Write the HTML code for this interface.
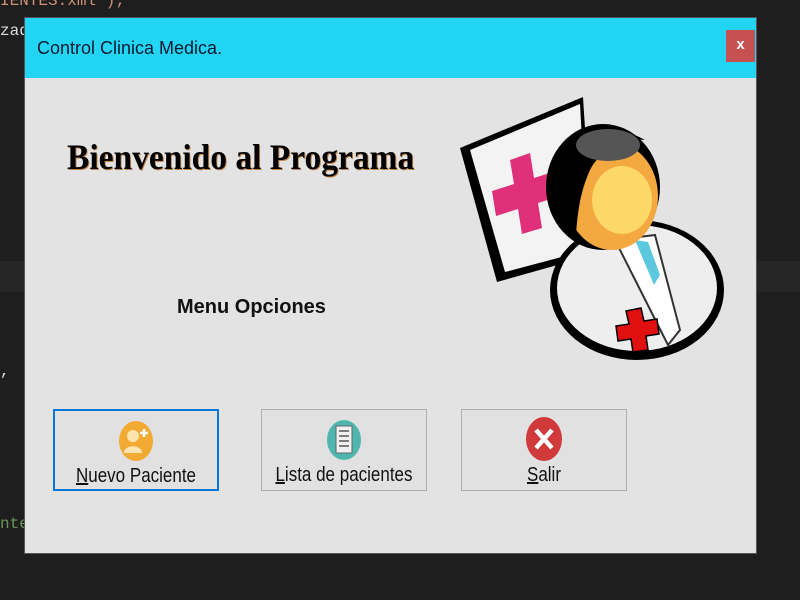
<!DOCTYPE html>
<html><head><meta charset="utf-8"><style>
body{margin:0;width:800px;height:600px;background:#1e1e1e;position:relative;overflow:hidden;font-family:"Liberation Sans",sans-serif}
.band{position:absolute;left:0;width:800px;top:261px;height:31px;background:#262626}
.code{position:absolute;font-family:"Liberation Mono",monospace;font-size:16px;color:#ce9178}
.win{position:absolute;left:24px;top:17px;width:731px;height:535px;background:#e3e3e3;border:1px solid #555}
.title{position:absolute;left:0;top:0;width:731px;height:60px;background:#22d5f4}
.title span{position:absolute;left:12px;top:20px;font-size:18px;color:#0a1a30}
.close{position:absolute;left:701px;top:12px;width:29px;height:32px;background:#c75050;color:#fff;font-size:15px;font-weight:bold;text-align:center;line-height:30px}
.h1{position:absolute;left:42px;top:118px;font-family:"Liberation Serif",serif;font-weight:bold;font-size:36px;color:#000;letter-spacing:0px;text-shadow:1px 1px 0 #c08040;transform:scaleX(0.93);transform-origin:left}
.menu{position:absolute;left:152px;top:278px;font-size:20px;font-weight:bold;color:#111}
.btn{position:absolute;top:391px;width:166px;height:82px;border:1px solid #adadad;background:#e1e1e1;box-sizing:border-box;text-align:center}
.btn.f{border:2px solid #0078d7}
.btn .lbl{position:absolute;left:-10px;right:-10px;top:54px;font-size:20px;color:#111;transform:scaleX(0.85)}
.btn svg{position:absolute;left:50%;top:9px;margin-left:-19px}
</style></head><body>
<div class="band"></div>
<div class="code" style="left:0;top:-8px">IENTES.xml");</div>
<div class="code" style="left:0;top:22px;color:#ddd">zad</div>
<div class="code" style="left:0;top:362px;color:#ddd">,</div>
<div class="code" style="left:0;top:515px;color:#6a9955">nte</div>
<div class="win">
<div class="title"><span>Control Clinica Medica.</span><div class="close">x</div></div>
<div class="h1">Bienvenido al Programa</div>
<div class="menu">Menu Opciones</div>
<div class="btn f" style="left:28px">
<svg width="38" height="42" viewBox="0 0 38 42"><ellipse cx="19" cy="21" rx="17" ry="20" fill="#f3aa33"/><circle cx="16" cy="16" r="6" fill="#fde3b0"/><path d="M7,33 C7,24 25,24 25,33 Z" fill="#fde3b0"/><path d="M27,9 v8 M23,13 h8" stroke="#fff" stroke-width="2.5"/></svg>
<div class="lbl"><u>N</u>uevo Paciente</div></div>
<div class="btn" style="left:236px">
<svg width="38" height="42" viewBox="0 0 38 42"><ellipse cx="19" cy="21" rx="17" ry="20" fill="#4fb7b0"/><rect x="11" y="7" width="16" height="27" fill="#f0f0f0" stroke="#666"/><path d="M14,12h10M14,17h10M14,22h10M14,27h10" stroke="#555" stroke-width="1.5"/></svg>
<div class="lbl"><u>L</u>ista de pacientes</div></div>
<div class="btn" style="left:436px">
<svg width="38" height="46" viewBox="0 0 38 46" style="top:6px"><ellipse cx="19" cy="23" rx="18" ry="22" fill="#d03a3a"/><path d="M11,14 L27,32 M27,14 L11,32" stroke="#fff" stroke-width="4.5"/></svg>
<div class="lbl"><u>S</u>alir</div></div>
</div>
<svg style="position:absolute;left:0;top:0" width="800" height="600" viewBox="0 0 800 600">
<polygon points="460,148 583,97 593,255 497,282" fill="#000"/>
<polygon points="470,150 580,104 588,250 505,272" fill="#f3f3f3"/>
<polygon points="510,160 530,153 534,178 556,171 560,196 538,203 542,228 522,234 518,209 496,216 492,191 514,184" fill="#e0307a"/>
<ellipse cx="637" cy="290" rx="87" ry="70" fill="#000"/>
<ellipse cx="637" cy="288" rx="80" ry="63" fill="#eee"/>
<polygon points="615,240 655,235 680,330 668,345" fill="#fff" stroke="#333" stroke-width="2"/>
<polygon points="635,240 648,242 660,275 654,285" fill="#5bc8e0"/>
<polygon points="626,311 641,308 644,321 657,319 659,334 646,336 648,350 633,352 631,339 618,341 616,326 629,324" fill="#e01010" stroke="#000" stroke-width="1.5"/>
<ellipse cx="603" cy="187" rx="57" ry="63" fill="#000"/>
<ellipse cx="612" cy="196" rx="46" ry="54" fill="#f4a840"/>
<ellipse cx="622" cy="200" rx="30" ry="34" fill="#fbd868"/>
<path d="M548,200 C545,130 600,115 645,140 C625,138 600,150 590,170 C582,188 578,205 576,235 Z" fill="#000"/>
<ellipse cx="608" cy="145" rx="32" ry="16" fill="#555"/>
</svg>
</body></html>
